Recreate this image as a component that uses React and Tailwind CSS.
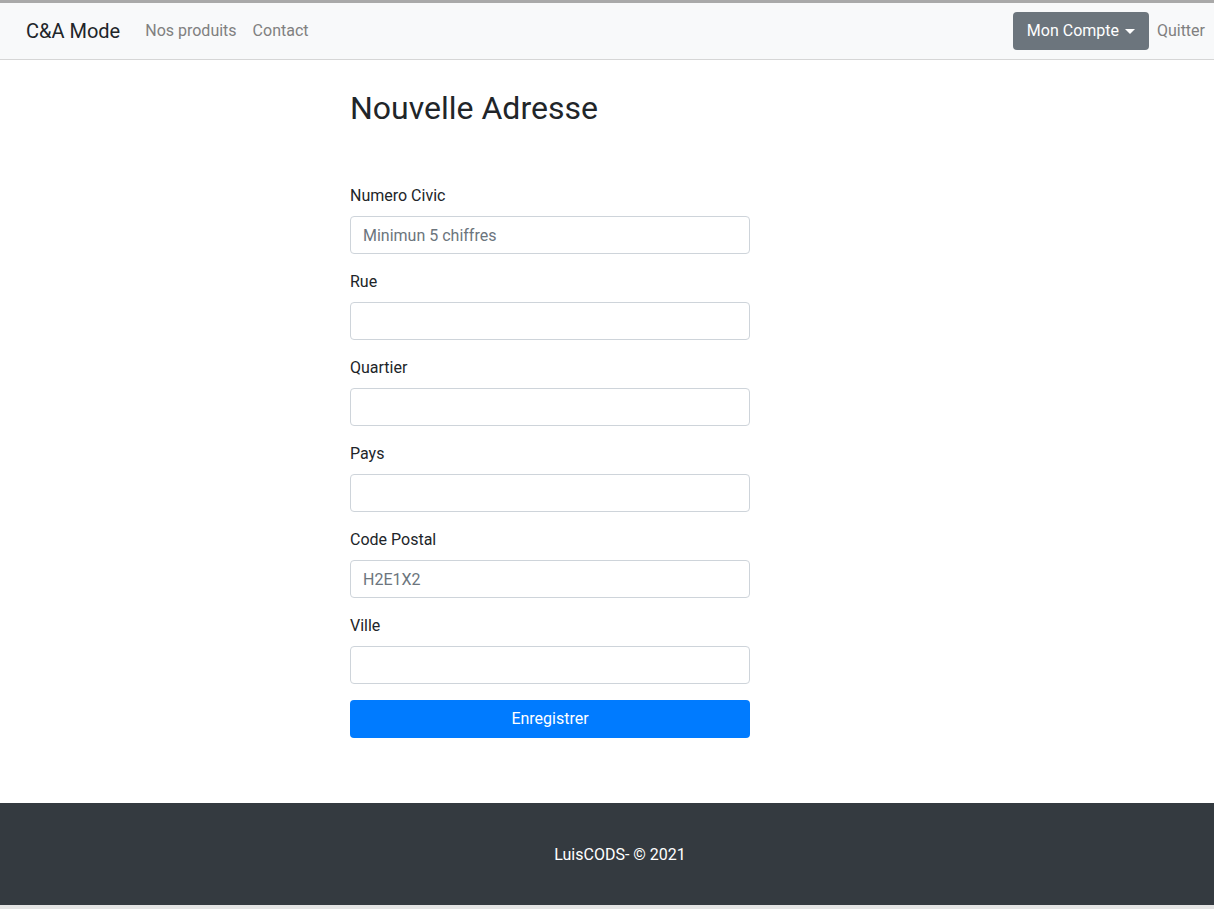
import React from 'react';

const fields = [
  { label: 'Numero Civic', placeholder: 'Minimun 5 chiffres' },
  { label: 'Rue', placeholder: '' },
  { label: 'Quartier', placeholder: '' },
  { label: 'Pays', placeholder: '' },
  { label: 'Code Postal', placeholder: 'H2E1X2' },
  { label: 'Ville', placeholder: '' },
];

export default function App() {
  return (
    <div className="min-h-[909px] bg-white text-[#212529] font-['Roboto',sans-serif]">
      <div className="h-[3px] bg-[#a9a9a9]" />

      {/* Navbar */}
      <nav className="h-[57px] bg-[#f8f9fa] border-b border-[#d6d6d6] flex items-center pl-[26px] pr-[1px]">
        <a className="text-[20px] leading-[30px] text-[#212529] mr-[17px] whitespace-nowrap">C&amp;A Mode</a>
        <a className="px-2 text-base text-[#808080] whitespace-nowrap">Nos produits</a>
        <a className="px-2 text-base text-[#808080] whitespace-nowrap">Contact</a>
        <div className="ml-auto flex items-center">
          <button className="w-[136px] h-[38px] rounded bg-[#6c757d] text-white text-base flex items-center justify-center">
            Mon Compte
            <span className="ml-[6px] w-0 h-0 border-t-[5px] border-t-white border-x-[5px] border-x-transparent" />
          </button>
          <a className="px-2 text-base text-[#808080]">Quitter</a>
        </div>
      </nav>

      {/* Main */}
      <main className="h-[743px] pt-[29px] pl-[350px]">
        <div className="w-[400px]">
          <h2 className="text-[32px] leading-[38px] font-normal mb-[57px]">Nouvelle Adresse</h2>
          <form onSubmit={(e) => e.preventDefault()}>
            {fields.map((f) => (
              <div key={f.label} className="mb-4">
                <label className="block text-base leading-6 mb-2">{f.label}</label>
                <input
                  type="text"
                  placeholder={f.placeholder}
                  className="block w-full h-[38px] px-3 text-base border border-[#ced4da] rounded text-[#495057] placeholder:text-[#6c757d] outline-none"
                />
              </div>
            ))}
            <button className="w-full h-[38px] rounded bg-[#007bff] text-white text-base">Enregistrer</button>
          </form>
        </div>
      </main>

      {/* Footer */}
      <footer className="h-[102px] bg-[#343a40] flex items-center justify-center pl-[26px] pt-[2px] text-white text-base">
        LuisCODS- © 2021
      </footer>
      <div className="h-[4px] bg-[#e4e4e4]" />
    </div>
  );
}
